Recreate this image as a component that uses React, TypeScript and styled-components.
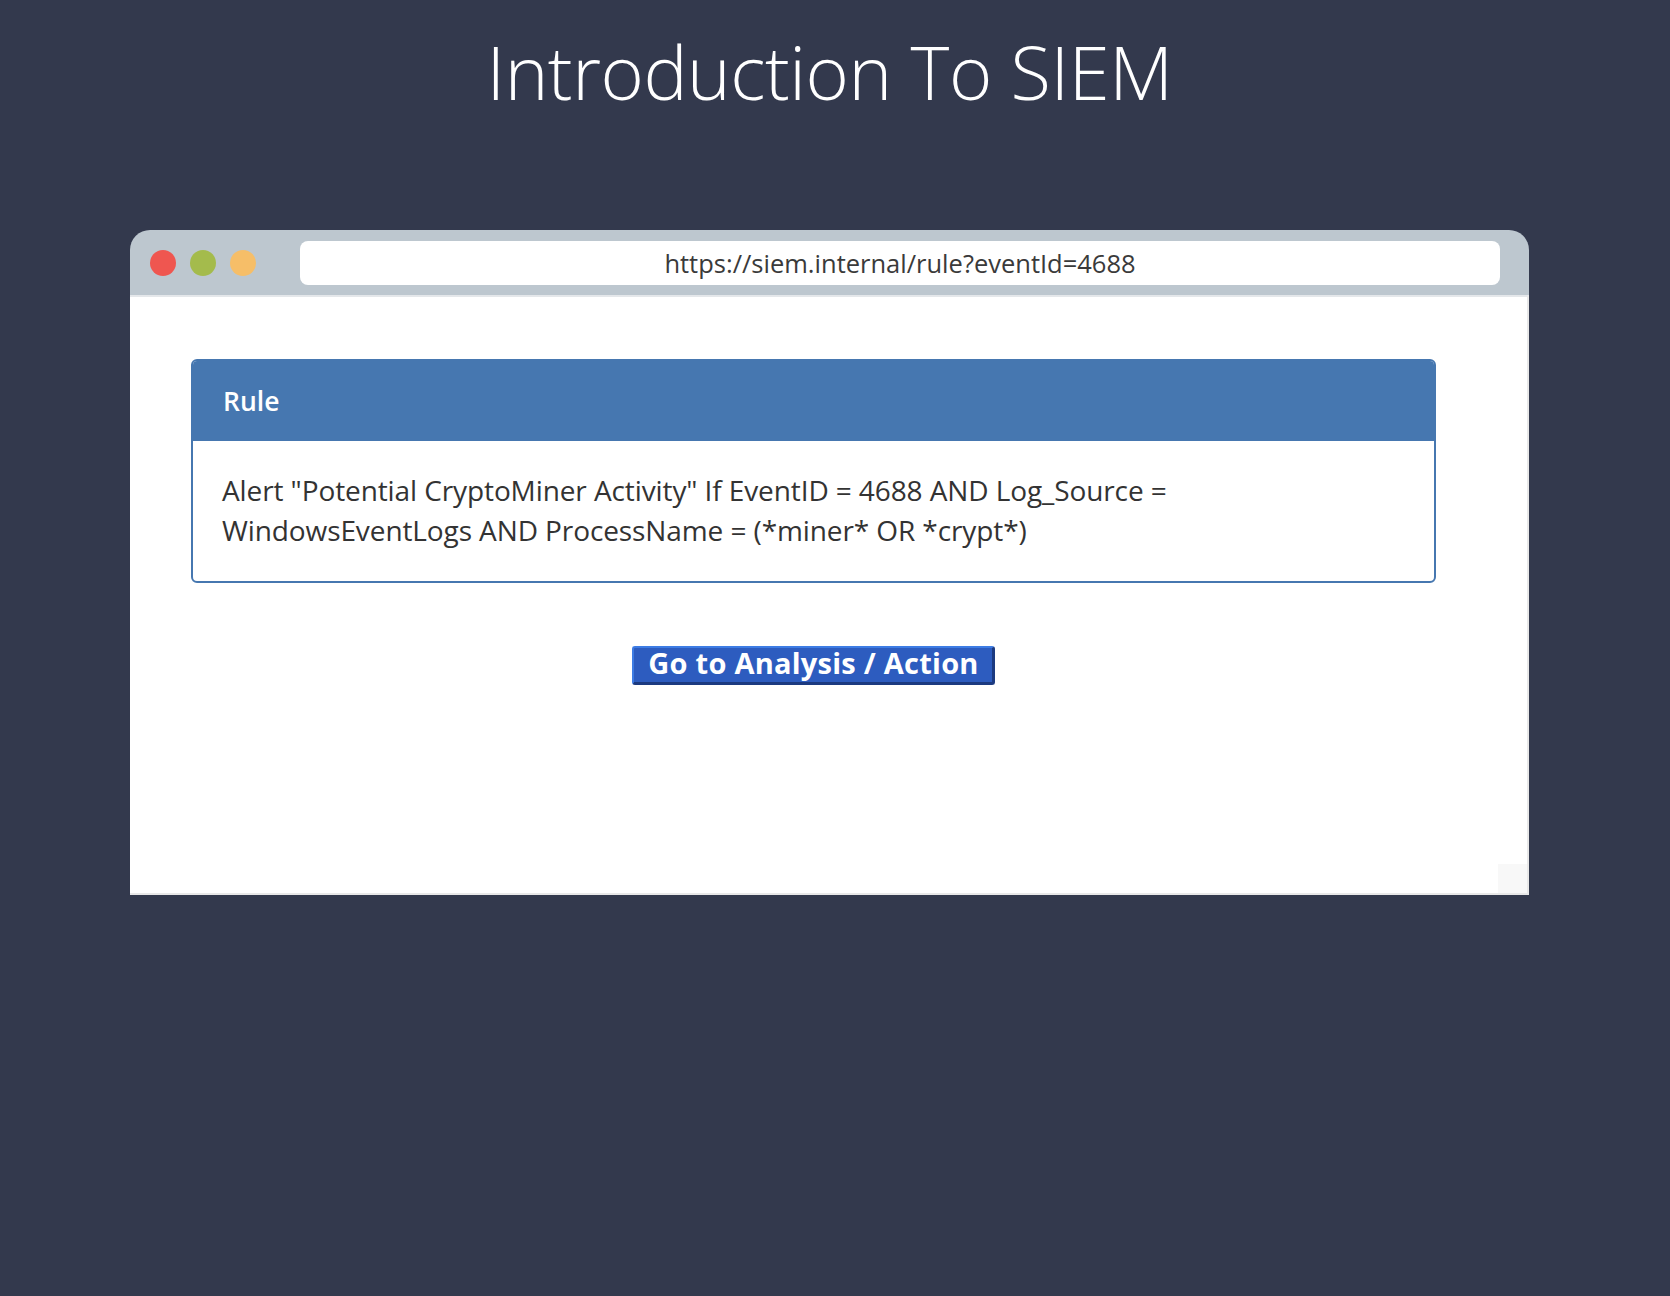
import React from "react";
import styled, { createGlobalStyle } from "styled-components";

const GlobalStyle = createGlobalStyle`
  html, body {
    margin: 0;
    padding: 0;
    background: #33394d;
  }
  body {
    font-family: "Open Sans", "Noto Sans", sans-serif;
  }
`;

const Page = styled.div`
  min-height: 1296px;
  box-sizing: border-box;
  padding: 0 11px 0 0;
  display: flex;
  flex-direction: column;
  align-items: center;
`;

const Title = styled.h1`
  margin: 24px 0 0;
  font-family: "Open Sans", sans-serif;
  font-weight: 300;
  font-size: 74px;
  line-height: 96px;
  color: #ffffff;
  letter-spacing: -0.45px;
`;

const Window = styled.div`
  margin-top: 110px;
  width: 1399px;
  display: flex;
  flex-direction: column;
`;

const TitleBar = styled.div`
  height: 65px;
  box-sizing: border-box;
  background: #bdc7cf;
  border-radius: 20px 20px 0 0;
  display: flex;
  align-items: center;
  padding: 0 29px 0 20px;
`;

const Dots = styled.div`
  display: flex;
  gap: 14px;
  margin-right: 44px;
`;

const Dot = styled.span<{ $color: string }>`
  width: 26px;
  height: 26px;
  border-radius: 50%;
  background: ${(p) => p.$color};
`;

const UrlBar = styled.div`
  flex: 1;
  height: 44px;
  margin-top: 1px;
  background: #ffffff;
  border-radius: 8px;
  display: flex;
  align-items: center;
  justify-content: center;
  font-family: "Open Sans", sans-serif;
  font-size: 25.5px;
  color: #3a3a3a;
`;

const Content = styled.div`
  position: relative;
  height: 600px;
  box-sizing: border-box;
  background: #ffffff;
  border-top: 2px solid #e4e7ea;
  border-right: 2px solid #e8e8e8;
  border-bottom: 2px solid #e8e8e8;
  padding: 62px 91px 0 61px;
  display: flex;
  flex-direction: column;
  align-items: center;
`;

const Corner = styled.div`
  position: absolute;
  right: 0;
  bottom: 0;
  width: 29px;
  height: 29px;
  background: #f8f8f8;
`;

const Card = styled.section`
  align-self: stretch;
  border: 2px solid #4677b0;
  border-radius: 6px;
  overflow: hidden;
`;

const CardHeader = styled.div`
  height: 80px;
  box-sizing: border-box;
  background: #4677b0;
  color: #ffffff;
  display: flex;
  align-items: center;
  padding: 0 30px 0 30px;
  font-family: "Open Sans", sans-serif;
  font-size: 26.5px;
  font-weight: 600;
`;

const CardBody = styled.div`
  padding: 30px 29px 31px 29px;
  font-family: "Open Sans", sans-serif;
  font-size: 28px;
  line-height: 39.5px;
  color: #333333;
  letter-spacing: -0.1px;
`;

const ActionButton = styled.button`
  margin-top: 63px;
  height: 39px;
  box-sizing: border-box;
  padding: 0 13px 4px 14px;
  background: #2d5cbf;
  color: #ffffff;
  font-family: "Open Sans", sans-serif;
  font-weight: 700;
  font-size: 29px;
  line-height: 30px;
  letter-spacing: 0.25px;
  border-style: solid;
  border-width: 2px 3px 3px 2px;
  border-color: #3d7ce4 #1c3a80 #1c3a80 #3d7ce4;
  border-radius: 3px;
  cursor: pointer;
`;

export default function App() {
  return (
    <>
      <GlobalStyle />
      <Page>
        <Title>Introduction To SIEM</Title>
        <Window>
          <TitleBar>
            <Dots>
              <Dot $color="#ef5650" />
              <Dot $color="#a4bb4c" />
              <Dot $color="#f6be68" />
            </Dots>
            <UrlBar>https://siem.internal/rule?eventId=4688</UrlBar>
          </TitleBar>
          <Content>
            <Card>
              <CardHeader>Rule</CardHeader>
              <CardBody>
                Alert "Potential CryptoMiner Activity" If EventID = 4688 AND Log_Source = WindowsEventLogs AND
                ProcessName = (*miner* OR *crypt*)
              </CardBody>
            </Card>
            <ActionButton>Go to Analysis / Action</ActionButton>
            <Corner />
          </Content>
        </Window>
      </Page>
    </>
  );
}
